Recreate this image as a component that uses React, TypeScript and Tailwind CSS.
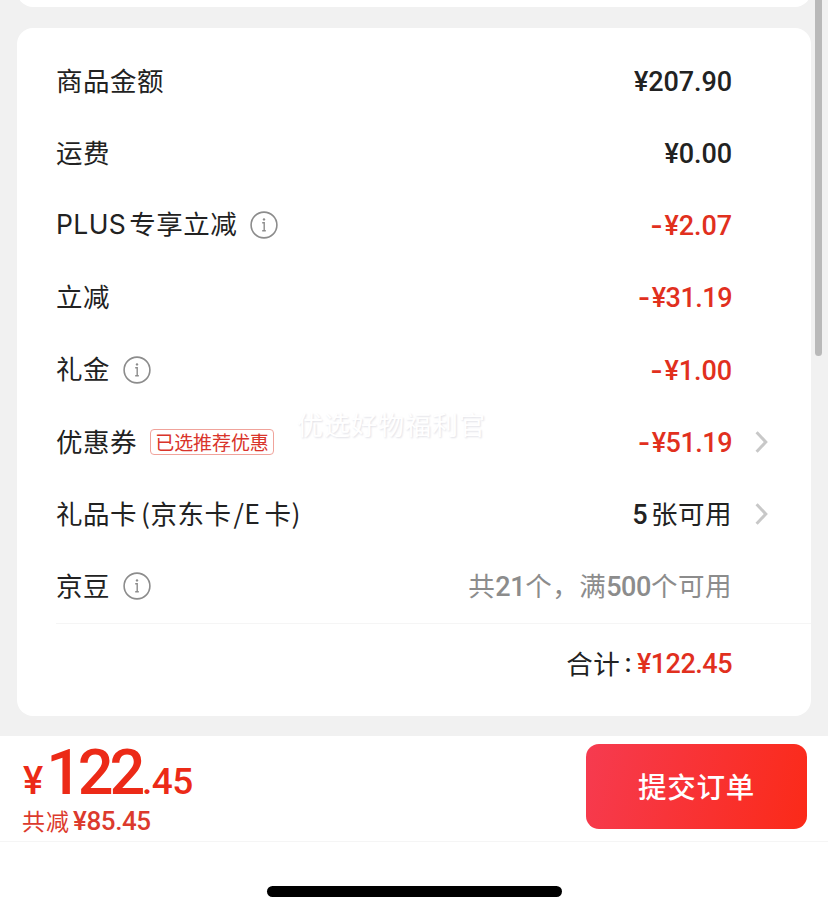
import React from 'react';
import { clsx } from 'clsx';

interface PriceRow {
  label: React.ReactNode;
  value: React.ReactNode;
  info?: boolean;
  tag?: string;
  arrow?: boolean;
  tone?: 'dark' | 'red' | 'gray';
}

const Num = ({ children, className }: { children: React.ReactNode; className?: string }) => (
  <span className={clsx("font-['Roboto',sans-serif] font-medium", className)}>{children}</span>
);

const Price = ({ amount, minus, tight }: { amount: string; minus?: boolean; tight?: boolean }) => (
  <span className={clsx('text-[27px]', tight ? 'tracking-[-0.5px]' : 'tracking-[-0.1px]')}>
    {minus && <span className="mr-0.5 font-['Inter',sans-serif] font-semibold">-</span>}
    <Num>¥{amount}</Num>
  </span>
);

const InfoIcon = () => (
  <svg className="ml-[13px] h-7 w-7 shrink-0" viewBox="0 0 28 28" fill="none" stroke="#8c8c8c">
    <circle cx="14" cy="14" r="12.9" strokeWidth="1.6" />
    <path d="M12.2 11.8H14.2V19.8M12.2 19.8H15.8" strokeWidth="1.4" />
    <circle cx="14" cy="8.4" r="1.2" fill="#8c8c8c" stroke="none" />
  </svg>
);

const ArrowIcon = () => (
  <svg className="h-6 w-4" viewBox="0 0 16 24" fill="none" stroke="#c8c8c8" strokeWidth="3">
    <path d="M2.6 2.2L11.8 12L2.6 21.8" />
  </svg>
);

const rows: PriceRow[] = [
  { label: '商品金额', value: <Price amount="207.90" /> },
  { label: '运费', value: <Price amount="0.00" /> },
  {
    label: (
      <>
        <span className="mr-[3px] font-['Inter',sans-serif] tracking-[0.4px]">PLUS</span>
        专享立减
      </>
    ),
    value: <Price minus amount="2.07" />,
    info: true,
    tone: 'red',
  },
  { label: '立减', value: <Price minus tight amount="31.19" />, tone: 'red' },
  { label: '礼金', value: <Price minus amount="1.00" />, info: true, tone: 'red' },
  {
    label: '优惠券',
    value: <Price minus tight amount="51.19" />,
    tag: '已选推荐优惠',
    arrow: true,
    tone: 'red',
  },
  {
    label: (
      <>
        礼品卡<span className="ml-1">(</span>京东卡<span className="ml-0.5">/E</span>
        <span className="ml-1">卡)</span>
      </>
    ),
    value: (
      <>
        <Num className="mr-[3px] text-[27px]">5</Num>张可用
      </>
    ),
    arrow: true,
  },
  {
    label: '京豆',
    value: (
      <>
        共<Num className="text-[27px] tracking-[-0.4px]">21</Num>个，满
        <Num className="text-[27px] tracking-[-0.4px]">500</Num>个可用
      </>
    ),
    info: true,
    tone: 'gray',
  },
];

const Row = ({ label, value, info, tag, arrow, tone = 'dark' }: PriceRow) => (
  <div className="flex h-[72.2px] items-center pr-[41px] pl-[39px]">
    <div className="flex items-center text-[26.5px] tracking-[0.5px] whitespace-nowrap text-[#222]">
      <span className="pb-[3px]">{label}</span>
      {info && <InfoIcon />}
      {tag && (
        <span className="ml-[13px] flex h-[26px] w-[124px] items-center justify-center rounded-[4px] border border-[#f0a39b] pb-0.5 text-[19px] leading-none tracking-[-0.1px] text-[#d9342b]">
          {tag}
        </span>
      )}
    </div>
    <div
      className={clsx(
        'ml-auto text-[26.5px] tracking-[0.5px] whitespace-nowrap',
        tone === 'dark' && 'text-[#222]',
        tone === 'red' && 'text-[#e1301e]',
        tone === 'gray' && 'text-[#8c8c8c]'
      )}
    >
      {value}
    </div>
    <div className="ml-[22px] flex w-4 justify-center">{arrow && <ArrowIcon />}</div>
  </div>
);

export default function App() {
  return (
    <div className="relative flex h-[914px] w-[828px] flex-col overflow-hidden bg-[#f1f1f1] font-['Noto_Sans_CJK_SC',sans-serif]">
      {/* Bottom edge of the previous card */}
      <div className="-mt-5 ml-[17px] h-[27px] w-[794px] shrink-0 rounded-b-[16px] bg-white" />

      {/* Price details */}
      <div className="mt-[21px] ml-[17px] h-[688px] w-[794px] shrink-0 rounded-[16px] bg-white pt-[17px]">
        {rows.map((row, index) => (
          <Row key={index} {...row} />
        ))}
        <div className="ml-[39px] border-t border-[#f5f5f5]" />
        <div className="flex h-20 items-center justify-end pr-[79px] text-[26.5px] text-[#222]">
          <span className="pb-0.5 tracking-[0.5px]">合计</span>
          <span className="mr-[5px] ml-1 pb-0.5 font-['Inter',sans-serif]">:</span>
          <span className="text-[#e1301e]">
            <Price tight amount="122.45" />
          </span>
        </div>
      </div>

      {/* Submit bar */}
      <div className="mt-5 flex h-[106px] shrink-0 justify-between border-b border-[#f5f5f5] bg-white pr-[21px] pl-[22px]">
        <div className="text-[#ec2a17]">
          <div className="flex h-[69px] items-baseline leading-[74px]">
            <Num className="ml-px text-[38px]">¥</Num>
            <Num className="ml-[3px] text-[63px] tracking-[-4.2px]">122</Num>
            <Num className="ml-px text-[37px] tracking-[-0.5px]">.45</Num>
          </div>
          <div className="flex items-baseline text-[23px] leading-[30px] text-[#dc3a2d]">
            <span className="tracking-[1px]">共减</span>
            <Num className="ml-[3px] text-[26px] tracking-[-0.4px]">¥85.45</Num>
          </div>
        </div>
        <button className="mt-2 h-[85px] w-[221px] rounded-[13px] bg-linear-[105deg] from-[#f63b50] to-[#fb2a18] text-[28.5px] font-medium tracking-[0.7px] text-white">
          提交订单
        </button>
      </div>

      {/* Home indicator */}
      <div className="flex flex-1 justify-center bg-white pt-11">
        <div className="h-[11px] w-[295px] rounded-full bg-black" />
      </div>

      {/* Watermark */}
      <div className="absolute top-[404px] left-[297px] text-[26px] tracking-[1px] text-white [text-shadow:1px_1px_2px_#e0e0e6]">
        优选好物福利官
      </div>

      {/* Scrollbar */}
      <div className="absolute top-0 left-[815px] h-[356px] w-[7px] rounded-b-full bg-[#b9b9b9]" />
    </div>
  );
}
